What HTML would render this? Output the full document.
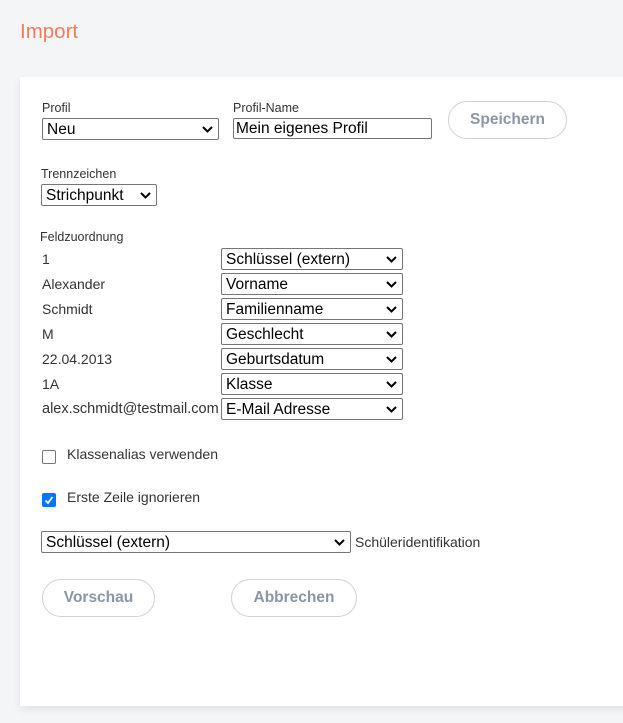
<!DOCTYPE html>
<html><head><meta charset="utf-8"><style>
*{box-sizing:border-box;margin:0;padding:0}
body{width:623px;height:723px;background:#f4f5f7;font-family:"Liberation Sans",sans-serif;position:relative;overflow:hidden}
.a{position:absolute}
.card{left:20px;top:77px;width:620px;height:629px;background:#fff;box-shadow:0 3px 8px rgba(0,0,0,.08)}
.lbl{font-size:12.5px;color:#333}
.txt{font-size:14px;color:#333}
.sel{border:1px solid #767676;border-radius:2px;background:#fff;font-size:15.5px;color:#000;padding-left:4px;line-height:21px;height:22px}
.sel svg{position:absolute;right:5px;top:7px}
.btn{border:1px solid #cdd2d7;border-radius:20px;font-weight:bold;font-size:15.5px;color:#8a96a3;text-align:center;background:#fff}
.cb{width:14px;height:14px;border:1px solid #767676;border-radius:2px;background:#fff}
</style></head><body>
<div class="a" style="left:20px;top:20px;font-size:20.5px;color:#f97a5a">Import</div>
<div class="a card"></div>

<div class="a lbl" style="left:42px;top:101px">Profil</div>
<div class="a sel" style="left:42px;top:118px;width:177px">Neu<svg width="11" height="7" viewBox="0 0 11 7"><path d="M1 1l4.5 4.5L10 1" stroke="#000" stroke-width="2" fill="none"/></svg></div>
<div class="a lbl" style="left:233px;top:101px">Profil-Name</div>
<div class="a sel" style="left:233px;top:118px;width:199px;height:21px;padding-left:2px;line-height:20px">Mein eigenes Profil</div>
<div class="a btn" style="left:448px;top:101px;width:119px;height:38px;line-height:36px">Speichern</div>

<div class="a lbl" style="left:41px;top:167px">Trennzeichen</div>
<div class="a sel" style="left:41px;top:184px;width:116px">Strichpunkt<svg width="11" height="7" viewBox="0 0 11 7"><path d="M1 1l4.5 4.5L10 1" stroke="#000" stroke-width="2" fill="none"/></svg></div>

<div class="a lbl" style="left:40px;top:230px">Feldzuordnung</div>

<div class="a txt" style="left:42px;top:251px">1</div>
<div class="a sel" style="left:221px;top:248px;width:182px">Schlüssel (extern)<svg width="11" height="7" viewBox="0 0 11 7"><path d="M1 1l4.5 4.5L10 1" stroke="#000" stroke-width="2" fill="none"/></svg></div>
<div class="a txt" style="left:42px;top:276px">Alexander</div>
<div class="a sel" style="left:221px;top:273px;width:182px">Vorname<svg width="11" height="7" viewBox="0 0 11 7"><path d="M1 1l4.5 4.5L10 1" stroke="#000" stroke-width="2" fill="none"/></svg></div>
<div class="a txt" style="left:42px;top:301px">Schmidt</div>
<div class="a sel" style="left:221px;top:298px;width:182px">Familienname<svg width="11" height="7" viewBox="0 0 11 7"><path d="M1 1l4.5 4.5L10 1" stroke="#000" stroke-width="2" fill="none"/></svg></div>
<div class="a txt" style="left:42px;top:326px">M</div>
<div class="a sel" style="left:221px;top:323px;width:182px">Geschlecht<svg width="11" height="7" viewBox="0 0 11 7"><path d="M1 1l4.5 4.5L10 1" stroke="#000" stroke-width="2" fill="none"/></svg></div>
<div class="a txt" style="left:42px;top:351px">22.04.2013</div>
<div class="a sel" style="left:221px;top:348px;width:182px">Geburtsdatum<svg width="11" height="7" viewBox="0 0 11 7"><path d="M1 1l4.5 4.5L10 1" stroke="#000" stroke-width="2" fill="none"/></svg></div>
<div class="a txt" style="left:42px;top:376px">1A</div>
<div class="a sel" style="left:221px;top:373px;width:182px">Klasse<svg width="11" height="7" viewBox="0 0 11 7"><path d="M1 1l4.5 4.5L10 1" stroke="#000" stroke-width="2" fill="none"/></svg></div>
<div class="a txt" style="left:42px;top:401px;font-size:14.5px">alex.schmidt@testmail.com</div>
<div class="a sel" style="left:221px;top:398px;width:182px">E-Mail Adresse<svg width="11" height="7" viewBox="0 0 11 7"><path d="M1 1l4.5 4.5L10 1" stroke="#000" stroke-width="2" fill="none"/></svg></div>

<div class="a cb" style="left:42px;top:450px"></div>
<div class="a txt" style="left:67px;top:446px">Klassenalias verwenden</div>
<div class="a cb" style="left:42px;top:493px;background:#0075ff;border-color:#0075ff"><svg width="12" height="12" viewBox="0 0 12 12" style="position:absolute;left:0;top:0"><path d="M2.5 6.5l2.5 2.5 4.5-6" stroke="#fff" stroke-width="1.8" fill="none"/></svg></div>
<div class="a txt" style="left:67px;top:489px">Erste Zeile ignorieren</div>

<div class="a sel" style="left:41px;top:531px;width:310px">Schlüssel (extern)<svg width="11" height="7" viewBox="0 0 11 7"><path d="M1 1l4.5 4.5L10 1" stroke="#000" stroke-width="2" fill="none"/></svg></div>
<div class="a txt" style="left:355px;top:534px">Schüleridentifikation</div>

<div class="a btn" style="left:42px;top:579px;width:113px;height:38px;line-height:36px">Vorschau</div>
<div class="a btn" style="left:231px;top:579px;width:126px;height:38px;line-height:36px">Abbrechen</div>
</body></html>
